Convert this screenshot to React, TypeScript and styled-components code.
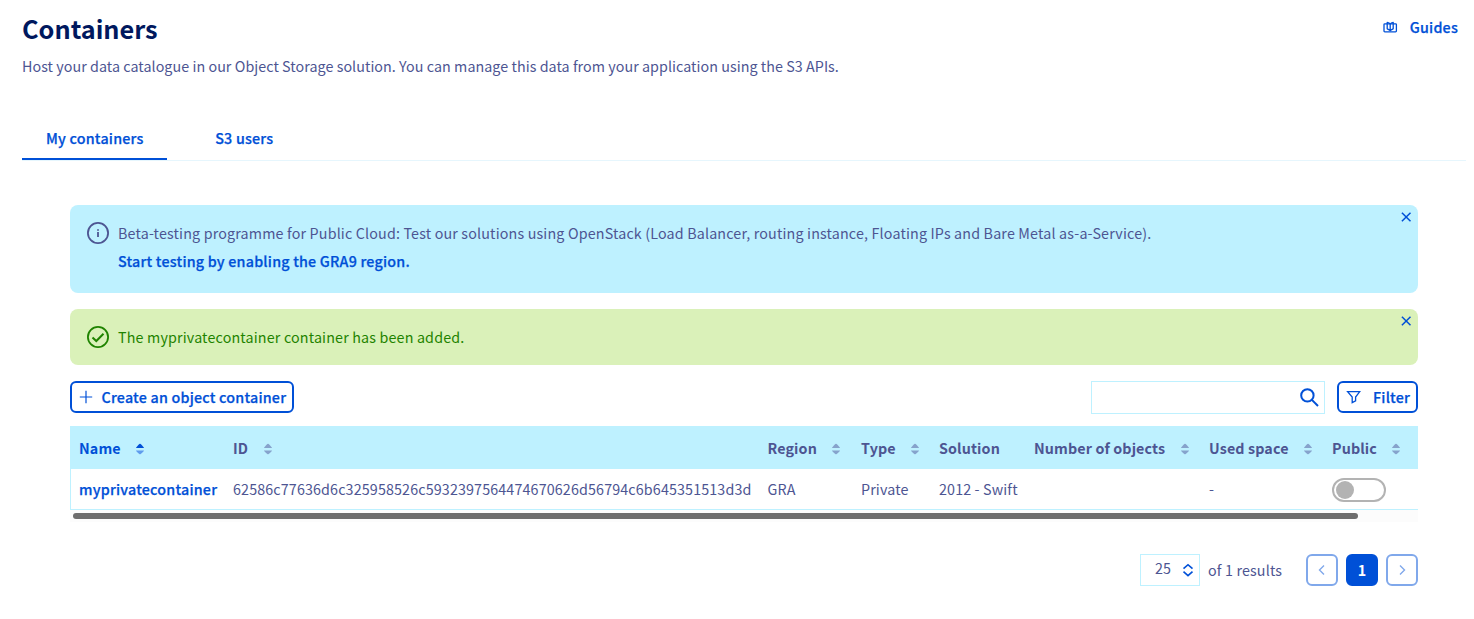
import React from 'react';
import styled, { createGlobalStyle, css } from 'styled-components';

const blue = '#0050d7';
const slate = '#4d5592';
const sky = '#bef1ff';

const GlobalStyle = createGlobalStyle`
  * { box-sizing: border-box; }
  body {
    margin: 0;
    background: #fff;
    color: ${slate};
    font-family: "Noto Sans CJK SC", "Noto Sans", sans-serif;
    font-size: 14.3px;
    line-height: 24px;
    overflow: hidden;
  }
  button { font: inherit; color: inherit; margin: 0; }
`;

const semibold = css`
  font-weight: 500;
  -webkit-text-stroke: 0.25px currentColor;
  letter-spacing: 0.21px;
`;

const Page = styled.main`
  height: 619px;
  padding: 12px 8px 0 22px;
`;

const Header = styled.header`
  display: flex;
  justify-content: space-between;
  align-items: flex-start;
  height: 42px;
`;

const Title = styled.h1`
  margin: 0;
  font-size: 25.3px;
  line-height: 32px;
  font-weight: 700;
  color: #00185e;
`;

const GuidesLink = styled.a`
  display: flex;
  align-items: center;
  gap: 12px;
  margin-right: 8px;
  padding-top: 3px;
  color: ${blue};
  ${semibold}
`;

const Lead = styled.p`
  margin: 0;
  letter-spacing: 0.05px;
`;

const Tabs = styled.nav`
  display: flex;
  height: 43px;
  margin-top: 40px;
  border-bottom: 1px solid #e6f6fd;
`;

const Tab = styled.a<{ $active?: boolean }>`
  height: 42px;
  padding: 8px 23.6px 0 24px;
  margin-right: 24px;
  color: ${blue};
  ${semibold}
  white-space: nowrap;
  border-bottom: 2px solid ${(p) => (p.$active ? blue : 'transparent')};
`;

const Content = styled.section`
  padding: 44px 48px 0;
`;

const Alert = styled.div<{ $tone: 'info' | 'success' }>`
  display: flex;
  gap: 8px;
  position: relative;
  height: ${(p) => (p.$tone === 'info' ? 88 : 56)}px;
  margin-bottom: 16px;
  padding: 16px;
  border-radius: 8px;
  background: ${(p) => (p.$tone === 'info' ? sky : '#daf1b9')};
  color: ${(p) => (p.$tone === 'info' ? slate : '#1f8300')};
  letter-spacing: 0.16px;
`;

const AlertLink = styled.a`
  display: block;
  margin-top: 4px;
  color: ${blue};
  ${semibold}
`;

const CloseButton = styled.button`
  position: absolute;
  top: 4px;
  right: 4px;
  display: flex;
  padding: 0;
  border: 0;
  background: none;
  color: ${blue};
`;

const Toolbar = styled.div`
  display: flex;
  align-items: flex-start;
  height: 45px;
`;

const OutlineButton = styled.button<{ $width: number; $gap: number }>`
  display: flex;
  align-items: center;
  gap: ${(p) => p.$gap}px;
  width: ${(p) => p.$width}px;
  height: 32px;
  padding: 0 0 0 7px;
  border: 2px solid ${blue};
  border-radius: 6px;
  background: #fff;
  color: ${blue};
  ${semibold}
  white-space: nowrap;
`;

const SearchBox = styled.div`
  display: flex;
  align-items: center;
  justify-content: flex-end;
  width: 234px;
  height: 33px;
  margin: 0 12px 0 auto;
  padding: 0 5px 0 0;
  border: 1px solid ${sky};
  color: ${blue};
`;

const Table = styled.div`
  overflow: hidden;
`;

const Row = styled.div<{ $head?: boolean }>`
  display: grid;
  grid-template-columns: 154px 534.5px 93.5px 78px 95px 175px 123px 1fr;
  align-items: center;
  height: ${(p) => (p.$head ? 43 : 41)}px;
  padding-left: ${(p) => (p.$head ? 9 : 8)}px;
  white-space: nowrap;
  background: ${(p) => (p.$head ? sky : '#fff')};
  font-weight: ${(p) => (p.$head ? 700 : 400)};
  letter-spacing: ${(p) => (p.$head ? 0.12 : 0.135)}px;
  border: 0 solid ${sky};
  border-width: ${(p) => (p.$head ? '0' : '0 0 1px 1px')};
`;

const HeadCell = styled.div<{ $active?: boolean }>`
  display: flex;
  align-items: center;
  gap: 14.5px;
  color: ${(p) => (p.$active ? blue : slate)};

  svg { margin-top: 2px; }
`;

const NameLink = styled.a`
  color: ${blue};
  ${semibold}
`;

const Toggle = styled.span`
  display: flex;
  align-items: center;
  width: 54px;
  height: 24px;
  margin-top: 1px;
  padding-left: 2px;
  border: 2px solid #b3b3b3;
  border-radius: 12px;
`;

const Knob = styled.span`
  width: 18px;
  height: 18px;
  border-radius: 50%;
  background: #b3b3b3;
`;

const ScrollTrack = styled.div`
  height: 12px;
  padding: 3px;
  background: #fcfcfc;
`;

const ScrollThumb = styled.div`
  width: 1285px;
  height: 6px;
  border-radius: 3px;
  background: #6e6e6e;
`;

const Pagination = styled.footer`
  display: flex;
  justify-content: flex-end;
  align-items: center;
  gap: 8px;
  height: 32px;
  margin-top: 32px;
`;

const PageSize = styled.div`
  display: flex;
  align-items: center;
  justify-content: space-between;
  width: 60px;
  height: 32px;
  padding: 0 5px 4px 14px;
  border: 1px solid ${sky};

  svg { margin-top: 4px; }
`;

const Results = styled.span`
  width: 90px;
  letter-spacing: 0.15px;
`;

const PageButton = styled.button<{ $current?: boolean }>`
  display: flex;
  align-items: center;
  justify-content: center;
  width: 32px;
  height: 32px;
  padding: 0;
  border: 2px solid ${(p) => (p.$current ? blue : '#80a8eb')};
  border-radius: 6px;
  background: ${(p) => (p.$current ? blue : '#fff')};
  color: ${(p) => (p.$current ? '#fff' : '#80a8eb')};
  font-weight: 700;
`;

const SortIcon = ({ active }: { active?: boolean }) => (
  <svg width="10" height="12" viewBox="0 0 10 12">
    <path d="M1 5 Q1 4.5 4.3 1 Q5 .4 5.7 1 Q9 4.5 9 5Z" fill={active ? blue : '#86a3cc'} />
    <path d="M1 7.5 Q1 8 4.3 11 Q5 11.6 5.7 11 Q9 8 9 7.5Z" fill={active ? '#5f9ced' : '#86a3cc'} />
  </svg>
);

const CloseIcon = () => (
  <svg width="16" height="16" viewBox="0 0 16 16" fill="none" stroke="currentColor" strokeWidth="1.5">
    <path d="M3.9 3.7 12.5 12.3M12.5 3.7 3.9 12.3" />
  </svg>
);

const Chevron = ({ flip }: { flip?: boolean }) => (
  <svg width="16" height="16" viewBox="0 0 16 16" fill="none" stroke="currentColor" strokeWidth="1.4">
    <path d={flip ? 'M6 3.5 10.5 8 6 12.5' : 'M10 3.5 5.5 8 10 12.5'} />
  </svg>
);

const columns = [
  { label: 'Name', sort: true, active: true },
  { label: 'ID', sort: true },
  { label: 'Region', sort: true },
  { label: 'Type', sort: true },
  { label: 'Solution' },
  { label: 'Number of objects', sort: true },
  { label: 'Used space', sort: true },
  { label: 'Public', sort: true },
];

export default function App() {
  return (
    <Page>
      <GlobalStyle />
      <Header>
        <Title>Containers</Title>
        <GuidesLink>
          <svg width="16" height="16" viewBox="0 0 16 16" fill="none" stroke="currentColor" strokeWidth="1.3" strokeLinejoin="round">
            <rect x="2" y="4.8" width="12.4" height="8" rx="0.8" />
            <path d="M8.2 11.6C7.6 10.8 6 10.6 5.2 9.8V3.4C6.8 3.6 7.7 4.2 8.2 5.2C8.7 4.2 9.6 3.6 11.2 3.4V9.8C10.4 10.6 8.8 10.8 8.2 11.6V5.2" />
          </svg>
          Guides
        </GuidesLink>
      </Header>
      <Lead>
        Host your data catalogue in our Object Storage solution. You can manage this data from your application using the S3 APIs.
      </Lead>
      <Tabs>
        <Tab $active>My containers</Tab>
        <Tab>S3 users</Tab>
      </Tabs>
      <Content>
        <Alert $tone="info">
          <svg width="24" height="24" viewBox="0 0 24 24" fill="none" stroke="currentColor">
            <circle cx="12" cy="12" r="10.1" strokeWidth="1.8" />
            <path d="M12 8.2V9.8M12 11V16" strokeWidth="1.8" />
          </svg>
          <div>
            Beta-testing programme for Public Cloud: Test our solutions using OpenStack (Load Balancer, routing instance, Floating IPs and Bare Metal as-a-Service).
            <AlertLink>Start testing by enabling the GRA9 region.</AlertLink>
          </div>
          <CloseButton aria-label="Close"><CloseIcon /></CloseButton>
        </Alert>
        <Alert $tone="success">
          <svg width="24" height="24" viewBox="0 0 24 24" fill="none" stroke="currentColor">
            <circle cx="12" cy="12" r="10.1" strokeWidth="1.8" />
            <path d="M6.5 12.4 10.3 16 17.5 8.8" strokeWidth="2" />
          </svg>
          <div>The myprivatecontainer container has been added.</div>
          <CloseButton aria-label="Close"><CloseIcon /></CloseButton>
        </Alert>
        <Toolbar>
          <OutlineButton $width={224} $gap={8.5}>
            <svg width="14" height="14" viewBox="0 0 14 14" fill="none" stroke="currentColor" strokeWidth="1.2">
              <path d="M7 .8V13.2M.8 7H13.2" />
            </svg>
            Create an object container
          </OutlineButton>
          <SearchBox>
            <svg width="20" height="20" viewBox="0 0 20 20" fill="none" stroke="currentColor" strokeWidth="2">
              <circle cx="8.4" cy="7.4" r="6.2" />
              <path d="M12.9 11.9 19 18" />
            </svg>
          </SearchBox>
          <OutlineButton $width={81} $gap={12}>
            <svg width="15" height="14" viewBox="0 0 15 14" fill="none" stroke="currentColor" strokeWidth="1.3">
              <path d="M1.6 1.6H13.8L9.6 7V10.8L6.2 12.6V7Z" />
            </svg>
            Filter
          </OutlineButton>
        </Toolbar>
        <Table>
          <Row $head>
            {columns.map((c) => (
              <HeadCell key={c.label} $active={c.active}>
                {c.label}
                {c.sort && <SortIcon active={c.active} />}
              </HeadCell>
            ))}
          </Row>
          <Row>
            <NameLink>myprivatecontainer</NameLink>
            <span>62586c77636d6c325958526c5932397564474670626d56794c6b645351513d3d</span>
            <span>GRA</span>
            <span>Private</span>
            <span>2012 - Swift</span>
            <span />
            <span>-</span>
            <Toggle><Knob /></Toggle>
          </Row>
          <ScrollTrack><ScrollThumb /></ScrollTrack>
        </Table>
        <Pagination>
          <PageSize>
            25
            <svg width="12" height="14" viewBox="0 0 12 14" fill="none" stroke={blue} strokeWidth="1.6">
              <path d="M1.5 5.7 6 1.7 10.5 5.7M1.5 8.7 6 12.7 10.5 8.7" />
            </svg>
          </PageSize>
          <Results>of 1 results</Results>
          <PageButton aria-label="Previous"><Chevron /></PageButton>
          <PageButton $current>1</PageButton>
          <PageButton aria-label="Next"><Chevron flip /></PageButton>
        </Pagination>
      </Content>
    </Page>
  );
}
